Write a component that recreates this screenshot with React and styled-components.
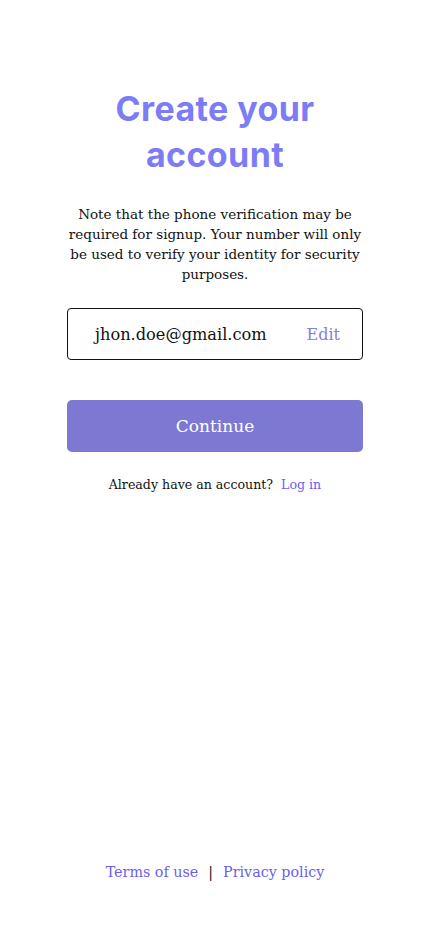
import React from "react";
import styled, { createGlobalStyle } from "styled-components";

const Global = createGlobalStyle`
  html, body { margin: 0; padding: 0; background: #fff; }
  #root { min-height: 100vh; }
`;

const Page = styled.div`
  min-height: 932px;
  display: flex;
  flex-direction: column;
  align-items: center;
  font-family: "DejaVu Serif", serif;
  color: #111;
`;

const Main = styled.main`
  width: 296px;
  display: flex;
  flex-direction: column;
  align-items: center;
  padding-top: 86px;
  flex: 1;
`;

const Title = styled.h1`
  margin: 0;
  font-family: Inter, "Open Sans", sans-serif;
  font-weight: 700;
  font-size: 34px;
  line-height: 46px;
  letter-spacing: 0.4px;
  color: #7b7cf6;
  text-align: center;
  width: 230px;
`;

const Note = styled.p`
  margin: 26px 0 0;
  font-size: 13.5px;
  line-height: 20px;
  text-align: center;
  color: #111;
`;

const Field = styled.div`
  margin-top: 24px;
  width: 100%;
  box-sizing: border-box;
  height: 52px;
  border: 1px solid #111;
  border-radius: 4px;
  display: flex;
  align-items: center;
  justify-content: space-between;
  padding: 0 22px 0 27px;
`;

const Email = styled.span`
  font-size: 16.2px;
  color: #111;
`;

const Edit = styled.button`
  border: 0;
  background: none;
  padding: 0;
  font-family: inherit;
  font-size: 16px;
  color: #8580d8;
  cursor: pointer;
`;

const Primary = styled.button`
  margin-top: 40px;
  width: 100%;
  height: 52px;
  border: 0;
  border-radius: 5px;
  background: #7d79d3;
  color: #fff;
  font-family: inherit;
  font-size: 17px;
  cursor: pointer;
`;

const Prompt = styled.p`
  margin: 25px 0 0;
  font-size: 12.6px;
  color: #111;
`;

const Link = styled.a`
  color: ${(p) => p.$color || "#6b5ef5"};
  text-decoration: none;
  margin-left: ${(p) => p.$gap || 0}px;
`;

const Footer = styled.footer`
  padding-bottom: 52px;
  font-size: 14.3px;
  display: flex;
  align-items: center;
  gap: 10px;
`;

const Sep = styled.span`
  color: #111;
`;

export default function App() {
  return (
    <Page>
      <Global />
      <Main>
        <Title>Create your account</Title>
        <Note>
          Note that the phone verification may be required for signup. Your
          number will only be used to verify your identity for security
          purposes.
        </Note>
        <Field>
          <Email>jhon.doe@gmail.com</Email>
          <Edit>Edit</Edit>
        </Field>
        <Primary>Continue</Primary>
        <Prompt>
          Already have an account?
          <Link href="#" $gap={8}>Log in</Link>
        </Prompt>
      </Main>
      <Footer>
        <Link href="#" $color="#6a5ff0">Terms of use</Link>
        <Sep>|</Sep>
        <Link href="#" $color="#6a5ff0">Privacy policy</Link>
      </Footer>
    </Page>
  );
}
